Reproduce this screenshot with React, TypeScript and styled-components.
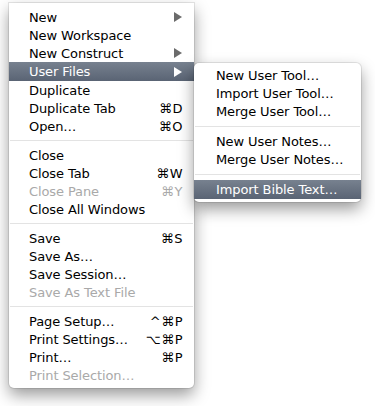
import styled, { createGlobalStyle } from "styled-components";

const GlobalStyle = createGlobalStyle`
  html, body {
    margin: 0;
    padding: 0;
    background: #ffffff;
    font-family: "DejaVu Sans", "Liberation Sans", sans-serif;
  }
`;

const Page = styled.div`
  width: 375px;
  height: 406px;
  padding: 3px 0 0 9px;
  box-sizing: border-box;
  overflow: hidden;
`;

// 메뉴 판 (메인 / 서브 공통)
const Menu = styled.div<{ $width: number; $sub?: boolean }>`
  position: relative;
  width: ${(p) => p.$width}px;
  box-sizing: border-box;
  padding: ${(p) => (p.$sub ? "3px 0 3px" : "5px 0 4px")};
  background: #ffffff;
  border-radius: ${(p) => (p.$sub ? "5px" : "0 0 5px 5px")};
  box-shadow: 0 0 0 1px rgba(0, 0, 0, 0.09), 0 7px 16px rgba(0, 0, 0, 0.4);
  display: flex;
  flex-direction: column;
`;

const SubMenu = styled(Menu)`
  position: absolute;
  left: 185px;
  top: 60px;
  z-index: 2;
`;

const Row = styled.div<{ $active?: boolean; $disabled?: boolean; $indent: number }>`
  height: 18px;
  display: flex;
  align-items: center;
  padding: 0 11px 0 ${(p) => p.$indent}px;
  font-size: 13px;
  letter-spacing: -0.1px;
  color: ${(p) => (p.$active ? "#ffffff" : p.$disabled ? "#a9a9a9" : "#000000")};
  background: ${(p) => (p.$active ? "linear-gradient(#77818f, #5a6474)" : "transparent")};
  ${(p) => p.$active && "height: 19px;"}
`;

const Label = styled.span`
  flex: 1;
  white-space: nowrap;
`;

const Shortcut = styled.span`
  white-space: nowrap;
  letter-spacing: 0.5px;
`;

const Arrow = styled.span<{ $active?: boolean }>`
  width: 0;
  height: 0;
  margin-right: 1px;
  border-top: 5px solid transparent;
  border-bottom: 5px solid transparent;
  border-left: 8px solid ${(p) => (p.$active ? "#ffffff" : "#6b6b6b")};
`;

const Separator = styled.div<{ $h: number }>`
  height: ${(p) => p.$h}px;
  display: flex;
  align-items: center;
  &::after {
    content: "";
    flex: 1;
    border-top: 1px solid #e3e3e3;
    margin: 0 1px;
  }
`;

type Item = {
  label: string;
  key?: string;
  sub?: boolean;
  active?: boolean;
  disabled?: boolean;
};

const mainGroups: Item[][] = [
  [
    { label: "New", sub: true },
    { label: "New Workspace" },
    { label: "New Construct", sub: true },
    { label: "User Files", sub: true, active: true },
    { label: "Duplicate" },
    { label: "Duplicate Tab", key: "⌘D" },
    { label: "Open…", key: "⌘O" },
  ],
  [
    { label: "Close" },
    { label: "Close Tab", key: "⌘W" },
    { label: "Close Pane", key: "⌘Y", disabled: true },
    { label: "Close All Windows" },
  ],
  [
    { label: "Save", key: "⌘S" },
    { label: "Save As…" },
    { label: "Save Session…" },
    { label: "Save As Text File", disabled: true },
  ],
  [
    { label: "Page Setup…", key: "^⌘P" },
    { label: "Print Settings…", key: "⌥⌘P" },
    { label: "Print…", key: "⌘P" },
    { label: "Print Selection…", disabled: true },
  ],
];

const subGroups: Item[][] = [
  [{ label: "New User Tool…" }, { label: "Import User Tool…" }, { label: "Merge User Tool…" }],
  [{ label: "New User Notes…" }, { label: "Merge User Notes…" }],
  [{ label: "Import Bible Text…", active: true }],
];

const renderGroups = (groups: Item[][], indent: number, sepH: number) =>
  groups.map((group, gi) => (
    <div key={gi}>
      {gi > 0 && <Separator $h={sepH} />}
      {group.map((item) => (
        <Row key={item.label} $active={item.active} $disabled={item.disabled} $indent={indent}>
          <Label>{item.label}</Label>
          {item.key && <Shortcut>{item.key}</Shortcut>}
          {item.sub && <Arrow $active={item.active} />}
        </Row>
      ))}
    </div>
  ));

export default function App() {
  return (
    <>
      <GlobalStyle />
      <Page>
        <Menu $width={185}>
          {renderGroups(mainGroups, 20, 11)}
          <SubMenu $width={167} $sub>
            {renderGroups(subGroups, 22, 12)}
          </SubMenu>
        </Menu>
      </Page>
    </>
  );
}
